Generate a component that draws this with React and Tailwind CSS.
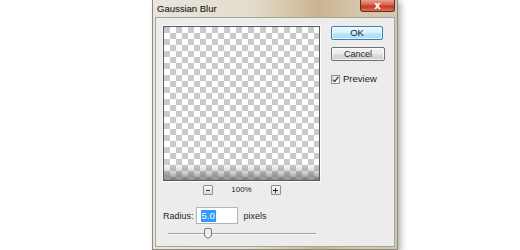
export default function App() {
  return (
    <div className="w-[520px] h-[250px] bg-white flex overflow-hidden font-['Liberation_Sans',Arial,sans-serif] text-[9px] text-[#1e1e1e]">
      {/* Window frame */}
      <div className="ml-[152px] w-[246px] h-[250px] flex flex-col bg-[linear-gradient(90deg,#e9e5dc_0%,#e4dccb_40%,#c9b48f_68%,#d6c7ab_85%,#cfc6b4_100%)] border-x border-b border-[#8f8a7e] shadow-[3px_2px_6px_rgba(0,0,0,0.3)]">
        {/* Title bar */}
        <div className="h-[17px] flex items-start justify-between">
          <span className="pl-[4px] pt-[3px] text-[9.5px] leading-[11px] text-[#222] [text-shadow:0_0_1px_rgba(0,0,0,0.25)]">Gaussian Blur</span>
          <div className="mr-[2px] w-[35px] h-[12px] rounded-b-[3px] border border-t-0 border-[#6b2a1e] bg-[linear-gradient(180deg,#e9a08c_0%,#d5614a_45%,#c0391f_55%,#d8745a_100%)] flex items-center justify-center">
            <span className="text-white text-[10px] leading-[10px] font-bold font-['DejaVu_Sans',sans-serif]">x</span>
          </div>
        </div>

        {/* Client area */}
        <div className="flex-1 mx-[2px] mb-[2px] border border-[#a7a395] bg-[#ececec] flex">
          <div className="pl-[7px] pt-[8px] flex flex-col">
            {/* Preview */}
            <div className="w-[157px] h-[155px] border border-[#5a5a5a] shadow-[0_0_0_1px_#fafafa] bg-[conic-gradient(#fff_25%,#cacaca_0_50%,#fff_0_75%,#cacaca_0)] bg-[length:12px_12px] flex flex-col justify-end">
              <div className="h-[16px] bg-[linear-gradient(180deg,rgba(120,120,120,0)_0%,rgba(110,110,110,0.3)_50%,rgba(80,80,80,0.65)_100%)]" />
            </div>

            {/* Zoom controls */}
            <div className="mt-[4px] w-[157px] flex items-center justify-center gap-[14px]">
              <div className="w-[10px] h-[10px] border border-[#8d8d8d] rounded-[1px] bg-[linear-gradient(180deg,#fafafa,#dcdcdc)] flex items-center justify-center">
                <div className="w-[4px] h-px bg-[#333]" />
              </div>
              <span className="text-[8px] leading-[10px] w-[30px] text-center">100%</span>
              <div className="w-[10px] h-[10px] border border-[#8d8d8d] rounded-[1px] bg-[linear-gradient(180deg,#fafafa,#dcdcdc)] flex items-center justify-center relative">
                <div className="w-[5px] h-px bg-[#333]" />
                <div className="absolute w-px h-[5px] bg-[#333]" />
              </div>
            </div>

            {/* Radius */}
            <div className="mt-[12px] flex items-center">
              <span className="text-[9px] leading-[12px]">Radius:</span>
              <div className="ml-[2px] w-[42px] h-[17px] border border-[#abb6c4] bg-white flex items-center pl-[4px]">
                <span className="bg-[#3399ff] text-white text-[9.5px] leading-[12px] px-px">5.0</span>
              </div>
              <span className="ml-[6px] text-[9px] leading-[12px]">pixels</span>
            </div>

            {/* Slider */}
            <div className="mt-[4px] ml-[5px] w-[148px] h-[11px] flex items-center relative">
              <div className="w-full h-[2px] border-t border-[#a0a0a0] border-b border-b-white" />
              <svg className="absolute left-[36px] top-0" width="8" height="11" viewBox="0 0 8 11">
                <path d="M0.5 2 Q0.5 0.5 2 0.5 H6 Q7.5 0.5 7.5 2 V8 L4 10.5 L0.5 8 Z" fill="#ececec" stroke="#7a7a7a" />
              </svg>
            </div>
          </div>

          {/* Buttons */}
          <div className="ml-[11px] pt-[8px] flex flex-col">
            <div className="w-[52px] h-[14px] rounded-[2px] border border-[#3c7fb1] bg-[linear-gradient(180deg,#eaf6fd_0%,#d9f0fc_50%,#bee6fd_51%,#a7d9f5_100%)] shadow-[inset_0_0_0_1px_rgba(255,255,255,0.7)] flex items-center justify-center text-[9.5px] leading-[12px]">
              OK
            </div>
            <div className="mt-[7px] w-[54px] h-[14px] rounded-[2px] border border-[#707070] bg-[linear-gradient(180deg,#f2f2f2_0%,#ebebeb_50%,#dddddd_51%,#cfcfcf_100%)] shadow-[inset_0_0_0_1px_rgba(255,255,255,0.7)] flex items-center justify-center text-[9px] leading-[12px]">
              Cancel
            </div>
            <div className="mt-[12px] flex items-center">
              <div className="w-[9px] h-[9px] border border-[#8e8f8f] bg-[linear-gradient(135deg,#dcdcdc,#fff)] flex items-center justify-center">
                <svg width="7" height="7" viewBox="0 0 7 7">
                  <path d="M0.8 3.6 L2.7 5.6 L6.2 0.8" fill="none" stroke="#30404f" strokeWidth="1.3" />
                </svg>
              </div>
              <span className="ml-[3px] text-[9.5px] leading-[12px]">Preview</span>
            </div>
          </div>
        </div>
      </div>
    </div>
  );
}
